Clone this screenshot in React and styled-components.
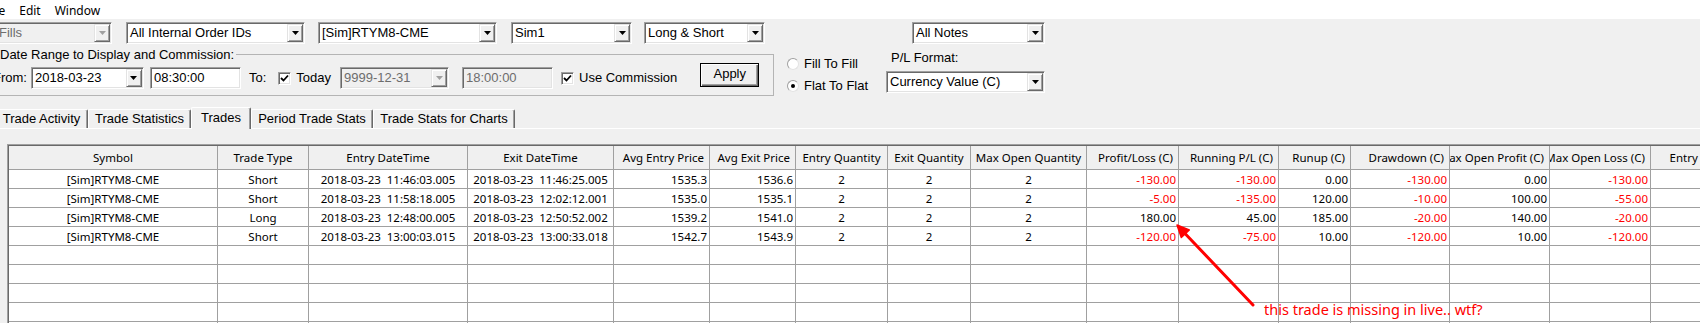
import React from "react"
import styled, { createGlobalStyle } from "styled-components"

const GlobalStyle = createGlobalStyle`
  * { box-sizing: border-box; }
  html, body { margin: 0; padding: 0; background: #f0f0f0; overflow: hidden; }
  body {
    font-family: "Liberation Sans", Arial, sans-serif;
    font-size: 13px;
    color: #000;
  }
`

const columns = [
  { title: "Symbol", width: 209, align: "center", head: "center" },
  { title: "Trade Type", width: 91, align: "center", head: "center" },
  { title: "Entry DateTime", width: 159, align: "center", head: "center" },
  { title: "Exit DateTime", width: 146, align: "center", head: "center" },
  { title: "Avg Entry Price", width: 96, align: "right", head: "right" },
  { title: "Avg Exit Price", width: 86, align: "right", head: "right" },
  { title: "Entry Quantity", width: 92, align: "center", head: "center" },
  { title: "Exit Quantity", width: 83, align: "center", head: "center" },
  { title: "Max Open Quantity", width: 116, align: "center", head: "center" },
  { title: "Profit/Loss (C)", width: 92, align: "right", head: "right" },
  { title: "Running P/L (C)", width: 100, align: "right", head: "right" },
  { title: "Runup (C)", width: 72, align: "right", head: "right" },
  { title: "Drawdown (C)", width: 99, align: "right", head: "right" },
  { title: "Max Open Profit (C)", width: 100, align: "right", head: "right" },
  { title: "Max Open Loss (C)", width: 101, align: "right", head: "right" },
  { title: "Entry Efficiency", width: 120, align: "center", head: "center" },
]

const trades = [
  ["[Sim]RTYM8-CME", "Short", "2018-03-23  11:46:03.005", "2018-03-23  11:46:25.005", "1535.3", "1536.6", "2", "2", "2", "-130.00", "-130.00", "0.00", "-130.00", "0.00", "-130.00", ""],
  ["[Sim]RTYM8-CME", "Short", "2018-03-23  11:58:18.005", "2018-03-23  12:02:12.001", "1535.0", "1535.1", "2", "2", "2", "-5.00", "-135.00", "120.00", "-10.00", "100.00", "-55.00", ""],
  ["[Sim]RTYM8-CME", "Long", "2018-03-23  12:48:00.005", "2018-03-23  12:50:52.002", "1539.2", "1541.0", "2", "2", "2", "180.00", "45.00", "185.00", "-20.00", "140.00", "-20.00", ""],
  ["[Sim]RTYM8-CME", "Short", "2018-03-23  13:00:03.015", "2018-03-23  13:00:33.018", "1542.7", "1543.9", "2", "2", "2", "-120.00", "-75.00", "10.00", "-120.00", "10.00", "-120.00", ""],
]

const tabs = [
  { label: "Trade Activity", width: 93 },
  { label: "Trade Statistics", width: 103 },
  { label: "Trades", width: 60, selected: true },
  { label: "Period Trade Stats", width: 122 },
  { label: "Trade Stats for Charts", width: 142 },
]

function Combo({ width, ml = 0, disabled, children }) {
  return (
    <ComboBox $width={width} $ml={ml} $disabled={disabled}>
      <ComboText $disabled={disabled}>{children}</ComboText>
      <DropButton>
        <svg width="7" height="4" viewBox="0 0 7 4">
          <path d="M0 0h7L3.5 4z" fill={disabled ? "#a0a0a0" : "#000"} />
        </svg>
      </DropButton>
    </ComboBox>
  )
}

function Check({ ml }) {
  return (
    <CheckBox $ml={ml}>
      <svg width="9" height="9" viewBox="0 0 9 9">
        <path d="M1 4l2.5 2.5L8 1.5" stroke="#000" strokeWidth="1.8" fill="none" />
      </svg>
    </CheckBox>
  )
}

export default function App() {
  return (
    <Page>
      <GlobalStyle />
      <MenuBar>
        <MenuItem $ml={-14}>File</MenuItem>
        <MenuItem>Edit</MenuItem>
        <MenuItem>Window</MenuItem>
      </MenuBar>

      <ToolRow>
        <Combo width={117} ml={-5} disabled>Fills</Combo>
        <Combo width={179} ml={14}>All Internal Order IDs</Combo>
        <Combo width={179} ml={13}>[Sim]RTYM8-CME</Combo>
        <Combo width={121} ml={14}>Sim1</Combo>
        <Combo width={121} ml={12}>Long &amp; Short</Combo>
        <Combo width={133} ml={147}>All Notes</Combo>
      </ToolRow>

      <OptionsRow>
        <GroupBox>
          <GroupLegend>Date Range to Display and Commission:</GroupLegend>
          <FormRow>
            <Caption>From:</Caption>
            <Combo width={113} ml={4}>2018-03-23</Combo>
            <TextBox $width={91} $ml={6}>08:30:00</TextBox>
            <Caption $ml={8}>To:</Caption>
            <Check ml={12} />
            <Caption $ml={5}>Today</Caption>
            <Combo width={109} ml={9} disabled>9999-12-31</Combo>
            <TextBox $width={91} $ml={13} $disabled>18:00:00</TextBox>
            <Check ml={8} />
            <Caption $ml={5}>Use Commission</Caption>
            <ApplyButton>Apply</ApplyButton>
          </FormRow>
        </GroupBox>

        <RadioGroup>
          <RadioItem>
            <Radio />
            <Caption $ml={5}>Fill To Fill</Caption>
          </RadioItem>
          <RadioItem>
            <Radio $checked />
            <Caption $ml={5}>Flat To Flat</Caption>
          </RadioItem>
        </RadioGroup>

        <FormatGroup>
          <FormatLabel>P/L Format:</FormatLabel>
          <Combo width={159}>Currency Value (C)</Combo>
        </FormatGroup>
      </OptionsRow>

      <TabStrip>
        {tabs.map((t) => (
          <Tab key={t.label} $width={t.width} $selected={t.selected}>
            {t.label}
          </Tab>
        ))}
      </TabStrip>

      <TabPanel>
        <TableFrame>
          <Grid $cols={columns.map((c) => c.width + "px").join(" ")}>
            {columns.map((c) => (
              <HeadCell key={c.title} $align={c.head}>
                <span>{c.title}</span>
              </HeadCell>
            ))}
            {trades.map((row, r) =>
              row.map((v, i) => (
                <Cell key={r + "-" + i} $align={columns[i].align} $neg={v.startsWith("-")}>
                  {v}
                </Cell>
              ))
            )}
            {Array.from({ length: 5 }).map((_, r) =>
              columns.map((c) => <Cell key={"e" + r + c.title} $align="center" />)
            )}
          </Grid>
        </TableFrame>
      </TabPanel>

      <Overlay width="1700" height="323" viewBox="0 0 1700 323">
        <line x1="1253" y1="305" x2="1185" y2="233.5" stroke="#f00" strokeWidth="3" strokeLinecap="round" />
        <polygon points="1177,225 1181.3,237.5 1189.3,229.9" fill="#f00" stroke="#f00" strokeWidth="1.5" strokeLinejoin="round" />
      </Overlay>
      <Note>this trade is missing in live.. wtf?</Note>
    </Page>
  )
}

const Page = styled.div`
  position: relative;
  width: 1700px;
  height: 323px;
  overflow: hidden;
  background: #f0f0f0;
`

const MenuBar = styled.div`
  display: flex;
  gap: 14px;
  height: 19px;
  background: #fff;
  font-family: "Noto Sans", "Segoe UI", sans-serif;
  font-size: 12px;
`

const MenuItem = styled.div`
  margin-left: ${({ $ml }) => ($ml || 0)}px;
  padding-top: 2px;
  line-height: 17px;
  white-space: nowrap;
`

const ToolRow = styled.div`
  display: flex;
  align-items: center;
  height: 22px;
  margin-top: 3px;
`

const ComboBox = styled.div`
  display: flex;
  flex-shrink: 0;
  width: ${({ $width }) => $width}px;
  height: 22px;
  margin-left: ${({ $ml }) => $ml}px;
  padding: 1px;
  background: ${({ $disabled }) => ($disabled ? "#f0f0f0" : "#fff")};
  border: 1px solid;
  border-color: #a0a0a0 #fff #fff #a0a0a0;
  box-shadow: inset 1px 1px #696969, inset -1px -1px #e3e3e3;
`

const ComboText = styled.div`
  flex: 1;
  padding-left: 2px;
  line-height: 18px;
  white-space: nowrap;
  overflow: hidden;
  color: ${({ $disabled }) => ($disabled ? "#6d6d6d" : "#000")};
`

const DropButton = styled.div`
  display: flex;
  align-items: center;
  justify-content: center;
  width: 16px;
  height: 18px;
  background: #f0f0f0;
  border: 1px solid;
  border-color: #e3e3e3 #696969 #696969 #e3e3e3;
  box-shadow: inset 1px 1px #fff, inset -1px -1px #a0a0a0;
`

const TextBox = styled.div`
  flex-shrink: 0;
  width: ${({ $width }) => $width}px;
  height: 22px;
  margin-left: ${({ $ml }) => $ml}px;
  padding: 1px 3px;
  line-height: 18px;
  white-space: nowrap;
  background: ${({ $disabled }) => ($disabled ? "#f0f0f0" : "#fff")};
  color: ${({ $disabled }) => ($disabled ? "#6d6d6d" : "#000")};
  border: 1px solid;
  border-color: #a0a0a0 #fff #fff #a0a0a0;
  box-shadow: inset 1px 1px #696969, inset -1px -1px #e3e3e3;
`

const OptionsRow = styled.div`
  display: flex;
  align-items: flex-start;
  margin-top: 3px;
`

const GroupBox = styled.fieldset`
  flex-shrink: 0;
  width: 782px;
  min-width: 0;
  margin: 0 0 0 -8px;
  padding: 5px 6px 6px 0;
  border: 1px solid #b4b4b4;
`

const GroupLegend = styled.legend`
  margin-left: 5px;
  padding: 0 2px;
  line-height: 15px;
  white-space: nowrap;
`

const FormRow = styled.div`
  display: flex;
  align-items: center;
  height: 22px;
`

const Caption = styled.span`
  flex-shrink: 0;
  margin-left: ${({ $ml }) => $ml || 0}px;
  line-height: 22px;
  white-space: nowrap;
`

const CheckBox = styled.div`
  display: flex;
  align-items: center;
  justify-content: center;
  flex-shrink: 0;
  width: 13px;
  height: 13px;
  margin-left: ${({ $ml }) => $ml}px;
  background: #fff;
  border: 1px solid;
  border-color: #a0a0a0 #fff #fff #a0a0a0;
  box-shadow: inset 1px 1px #696969, inset -1px -1px #e3e3e3;
`

const ApplyButton = styled.div`
  align-self: flex-start;
  flex-shrink: 0;
  width: 59px;
  height: 24px;
  margin: -4px 0 0 23px;
  text-align: center;
  line-height: 20px;
  background: #f0f0f0;
  border: 1px solid #000;
  box-shadow: inset 1px 1px #fff, inset -1px -1px #696969, inset -2px -2px #a0a0a0;
`

const RadioGroup = styled.div`
  display: flex;
  flex-direction: column;
  width: 99px;
  margin-left: 13px;
  padding-top: 6px;
`

const RadioItem = styled.div`
  display: flex;
  align-items: center;
  height: 22px;
`

const Radio = styled.div`
  position: relative;
  flex-shrink: 0;
  width: 12px;
  height: 12px;
  border-radius: 50%;
  background: #fff;
  border: 1px solid;
  border-color: #a0a0a0 #e3e3e3 #e3e3e3 #a0a0a0;

  &::after {
    content: "";
    display: ${({ $checked }) => ($checked ? "block" : "none")};
    position: absolute;
    left: 3px;
    top: 3px;
    width: 4px;
    height: 4px;
    border-radius: 50%;
    background: #000;
  }
`

const FormatGroup = styled.div`
  display: flex;
  flex-direction: column;
  padding-top: 3px;

  & > div:last-child {
    margin-top: 5px;
  }
`

const FormatLabel = styled.div`
  padding-left: 5px;
  line-height: 16px;
  white-space: nowrap;
`

const TabStrip = styled.div`
  display: flex;
  align-items: flex-end;
  height: 22px;
  margin: 10px 0 0 -5px;
  box-shadow: inset 0 -1px #fff;
`

const Tab = styled.div`
  flex-shrink: 0;
  width: ${({ $width }) => $width}px;
  height: ${({ $selected }) => ($selected ? 22 : 19)}px;
  margin-bottom: ${({ $selected }) => ($selected ? 0 : 1)}px;
  line-height: ${({ $selected }) => ($selected ? 20 : 18)}px;
  text-align: center;
  white-space: nowrap;
  background: #f0f0f0;
  border-top: 1px solid #fff;
  border-left: 1px solid #fff;
  border-right: 1px solid #696969;
  border-radius: 2px 2px 0 0;
  box-shadow: inset -1px 0 #a0a0a0;
`

const TabPanel = styled.div`
  padding: 15px 0 0 7px;
`

const TableFrame = styled.div`
  width: max-content;
  border-top: 1px solid #a0a0a0;
  border-left: 1px solid #a0a0a0;
`

const Grid = styled.div`
  display: grid;
  grid-template-columns: ${({ $cols }) => $cols};
  border-top: 1px solid #696969;
  border-left: 1px solid #696969;
  font-family: "Noto Sans", "Segoe UI", sans-serif;
  font-size: 11.5px;
`

const HeadCell = styled.div`
  display: flex;
  align-items: center;
  justify-content: ${({ $align }) => ($align === "right" ? "flex-end" : "center")};
  height: 24px;
  padding: 0 ${({ $align }) => ($align === "right" ? 5 : 0)}px 0 0;
  overflow: hidden;
  background: #f0f0f0;
  border-right: 1px solid #a0a0a0;
  border-bottom: 1px solid #a0a0a0;

  span {
    flex-shrink: 0;
    white-space: nowrap;
  }
`

const Cell = styled.div`
  display: flex;
  align-items: center;
  justify-content: ${({ $align }) => ($align === "right" ? "flex-end" : "center")};
  height: 19px;
  padding-right: ${({ $align }) => ($align === "right" ? 2 : 0)}px;
  white-space: pre;
  overflow: hidden;
  background: #fff;
  color: ${({ $neg }) => ($neg ? "#f00" : "#000")};
  border-right: 1px solid #a0a0a0;
  border-bottom: 1px solid #a0a0a0;
`

const Overlay = styled.svg`
  position: absolute;
  left: 0;
  top: 0;
  pointer-events: none;
`

const Note = styled.span`
  position: absolute;
  left: 1264px;
  top: 299px;
  line-height: 20px;
  color: #f00;
  font-family: "Noto Sans", "Segoe UI", sans-serif;
  font-size: 14.5px;
  white-space: nowrap;
`
